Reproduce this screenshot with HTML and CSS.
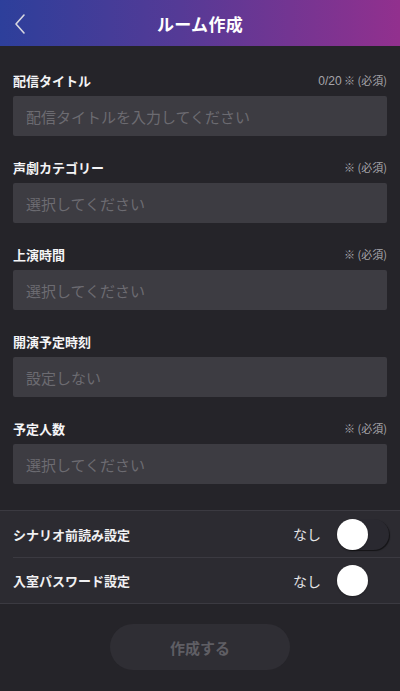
FILE: index.html
```html
<!DOCTYPE html>
<html lang="ja">
<head>
<meta charset="utf-8">
<link rel="stylesheet" href="styles.css">
</head>
<body>
<header class="header">
  <svg class="back" width="14" height="22" viewBox="0 0 14 22"><path d="M11 2 L3 11 L11 20" fill="none" stroke="#d8d8e0" stroke-width="1.6" stroke-linecap="round" stroke-linejoin="round"/></svg>
  <h1 class="title">ルーム作成</h1>
</header>
<main class="form">
  <div class="field">
    <div class="label-row"><span class="label">配信タイトル</span><span class="req"><span class="count">0/20</span> ※ (必須)</span></div>
    <div class="input">配信タイトルを入力してください</div>
  </div>
  <div class="field">
    <div class="label-row"><span class="label">声劇カテゴリー</span><span class="req">※ (必須)</span></div>
    <div class="input">選択してください</div>
  </div>
  <div class="field">
    <div class="label-row"><span class="label">上演時間</span><span class="req">※ (必須)</span></div>
    <div class="input">選択してください</div>
  </div>
  <div class="field">
    <div class="label-row"><span class="label">開演予定時刻</span></div>
    <div class="input">設定しない</div>
  </div>
  <div class="field">
    <div class="label-row"><span class="label">予定人数</span><span class="req">※ (必須)</span></div>
    <div class="input">選択してください</div>
  </div>
</main>
<section class="settings">
  <div class="row">
    <span class="row-label">シナリオ前読み設定</span>
    <span class="row-value">なし</span>
    <span class="toggle"><span class="knob"></span></span>
  </div>
  <div class="row">
    <span class="row-label">入室パスワード設定</span>
    <span class="row-value">なし</span>
    <span class="toggle plain"><span class="knob"></span></span>
  </div>
</section>
<div class="actions">
  <button class="submit">作成する</button>
</div>
</body>
</html>
```
FILE: styles.css
```css
* { box-sizing: border-box; }
html, body {
  margin: 0;
  padding: 0;
  background: #252429;
  font-family: "Noto Sans CJK JP", "Noto Sans", sans-serif;
  color: #fff;
}
.header {
  height: 46px;
  background: linear-gradient(90deg, #2d3f9b 0%, #553a96 45%, #92308e 100%);
  display: flex;
  align-items: center;
  justify-content: center;
  position: relative;
}
.back {
  position: absolute;
  left: 13px;
  top: 13px;
}
.title {
  margin: 0;
  font-size: 17px;
  font-weight: 700;
  letter-spacing: 0.3px;
}
.form {
  padding: 24px 13px 0;
  display: flex;
  flex-direction: column;
  gap: 21px;
}
.field {
  display: flex;
  flex-direction: column;
  gap: 6px;
}
.label-row {
  height: 20px;
  display: flex;
  align-items: center;
  justify-content: space-between;
}
.label {
  font-size: 13px;
  font-weight: 700;
  color: #f4f4f6;
}
.req {
  font-size: 11px;
  color: #a5a4aa;
}
.count {
  font-family: "Liberation Sans", "Noto Sans", sans-serif;
  font-size: 12px;
}
.input {
  height: 40px;
  background: #3d3c42;
  border-radius: 2px;
  display: flex;
  align-items: center;
  padding-left: 13px;
  font-size: 15px;
  color: #6c6b71;
}
.settings {
  margin-top: 26px;
  background: #2c2b31;
  border-top: 1px solid #3b3a41;
  border-bottom: 1px solid #3b3a41;
}
.row {
  height: 46px;
  display: flex;
  align-items: center;
  padding: 0 11px 0 13px;
}
.row + .row {
  height: 46px;
  border-top: 1px solid #3b3a41;
  margin-left: 13px;
  padding-left: 0;
}
.row-label {
  flex: 1;
  font-size: 13px;
  font-weight: 700;
  color: #f0f0f2;
}
.row-value {
  font-size: 14px;
  color: #e4e4e6;
  margin-right: 16px;
}
.toggle {
  width: 52px;
  height: 31px;
  border-radius: 16px;
  background: #2a2930;
  box-shadow: 1px 1px 1px rgba(0,0,0,0.55);
  display: flex;
  align-items: center;
  padding: 0;
}
.toggle.plain {
  background: transparent;
  box-shadow: none;
}
.knob {
  width: 31px;
  height: 31px;
  border-radius: 50%;
  background: #fff;
  box-shadow: 0 1px 2px rgba(0,0,0,0.3);
}
.actions {
  display: flex;
  justify-content: center;
  padding-top: 20px;
}
.submit {
  width: 180px;
  height: 46px;
  border: none;
  border-radius: 23px;
  background: #2f2e34;
  color: #5f5e64;
  font-family: "Noto Sans CJK JP", sans-serif;
  font-size: 15px;
  font-weight: 700;
}
```
